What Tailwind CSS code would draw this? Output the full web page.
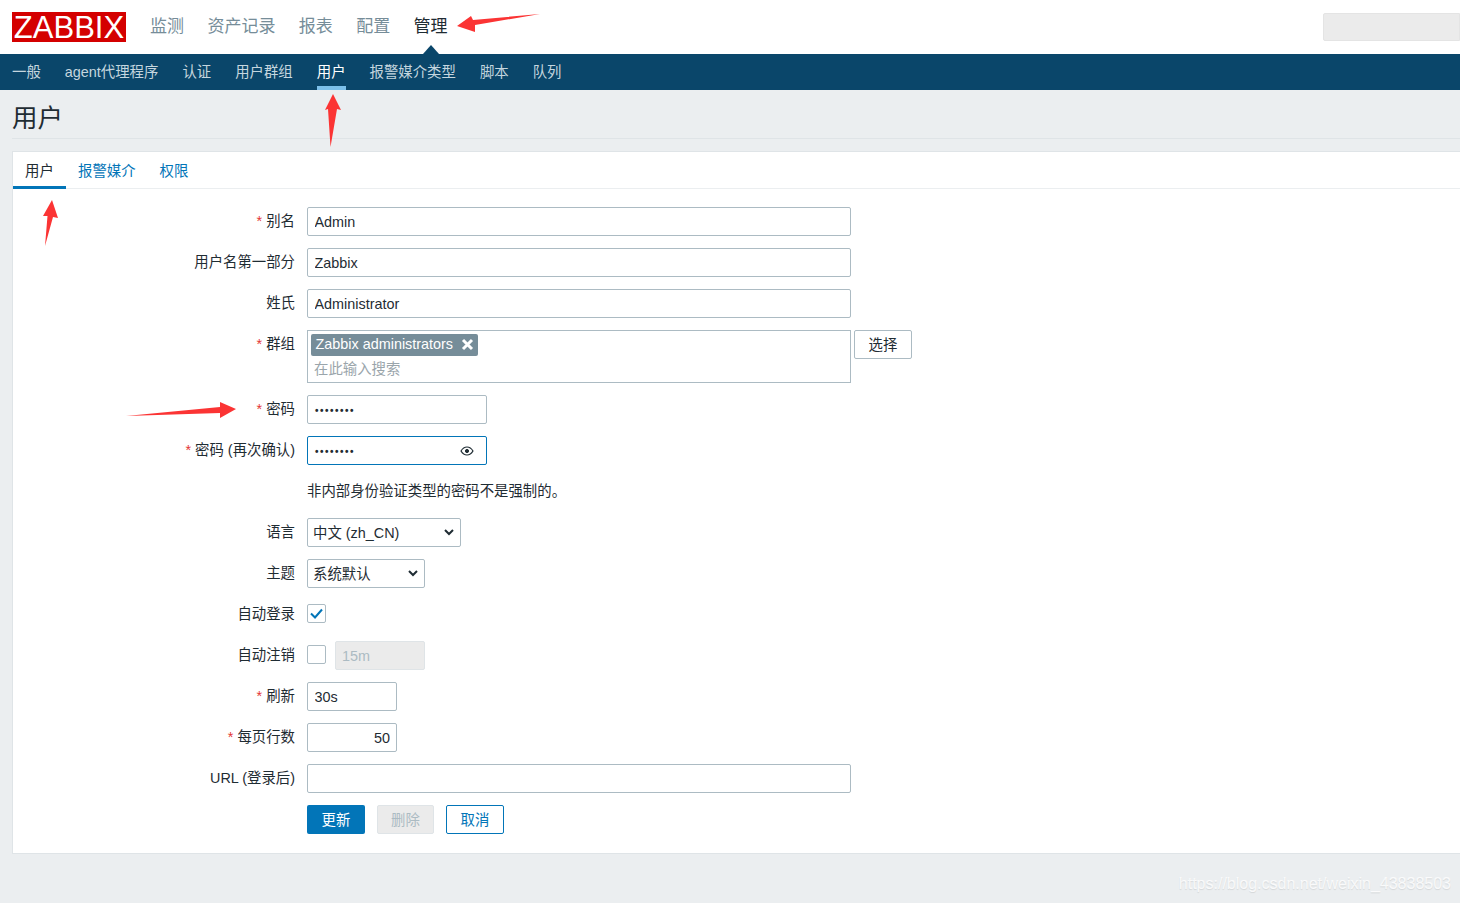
<!DOCTYPE html>
<html lang="zh-CN">
<head>
  <meta charset="UTF-8">
  <title>用户 - Zabbix</title>
  <script src="https://cdn.jsdelivr.net/npm/@tailwindcss/browser@4"></script>
</head>
<body class="relative h-[903px] w-[1460px] overflow-hidden bg-[#ebeef0] font-['Liberation_Sans','Noto_Sans_CJK_SC',sans-serif] text-[14.4px] text-[#1f2c33]">

  <!-- Top menu -->
  <header class="flex h-[54px] items-start bg-white pl-3">
    <div class="mt-3 flex h-[30px] w-[114px] items-center justify-center bg-[#d40000] text-[31px] leading-none text-white">ZABBIX</div>
    <nav class="ml-[24px] mt-[17px] flex gap-[23.4px] text-[17px] leading-5 text-[#768d99]">
      <a>监测</a>
      <a>资产记录</a>
      <a>报表</a>
      <a>配置</a>
      <a class="relative text-[#1f2c33]">管理
        <span class="absolute left-[9px] top-[28px] h-0 w-0 border-x-[8px] border-b-[9px] border-x-transparent border-b-[#0a466a]"></span>
      </a>
    </nav>
    <div class="ml-auto mt-[13px] h-[28px] w-[137px] rounded-l-[2px] border border-[#e4e4e4] bg-[#ebebeb]"></div>
  </header>

  <!-- Sub menu -->
  <nav class="flex h-9 gap-6 bg-[#0a466a] pl-3 leading-9 text-[#c5d6df]">
    <a>一般</a>
    <a>agent代理程序</a>
    <a>认证</a>
    <a>用户群组</a>
    <a class="h-9 border-b-[4px] border-[#7cc0ea] text-white">用户</a>
    <a>报警媒介类型</a>
    <a>脚本</a>
    <a>队列</a>
  </nav>

  <div class="ml-3 flex h-[49px] items-center border-b border-[#dfe4e7] pt-[8px] text-[25.5px]">用户</div>

  <!-- Card -->
  <main class="ml-3 mt-3 h-[703px] border border-r-0 border-[#dfe4e7] bg-white">
    <div class="flex h-[37px] gap-0 border-b border-[#ebeef0] leading-[39px] text-[#0275b8]">
      <a class="h-[37px] w-[53px] border-b-[3px] border-[#0275b8] text-center text-[#1f2c33]">用户</a>
      <a class="ml-3">报警媒介</a>
      <a class="ml-6">权限</a>
    </div>

    <form class="mt-[18px] grid grid-cols-[282px_1fr] gap-x-3 gap-y-3">
      <label class="h-[29px] pt-[3px] text-right leading-[22px]"><span class="text-[#e33734]">*</span> 别名</label>
      <input class="h-[29px] w-[544px] rounded-[2px] border border-[#acbbc3] px-[6.5px] text-[14.4px] outline-none" value="Admin">

      <label class="h-[29px] pt-[3px] text-right leading-[22px]">用户名第一部分</label>
      <input class="h-[29px] w-[544px] rounded-[2px] border border-[#acbbc3] px-[6.5px] text-[14.4px] outline-none" value="Zabbix">

      <label class="h-[29px] pt-[3px] text-right leading-[22px]">姓氏</label>
      <input class="h-[29px] w-[544px] rounded-[2px] border border-[#acbbc3] px-[6.5px] text-[14.4px] outline-none" value="Administrator">

      <label class="pt-[3px] text-right leading-[22px]"><span class="text-[#e33734]">*</span> 群组</label>
      <div class="flex items-start gap-[3px]">
        <div class="h-[53px] w-[544px] border border-[#acbbc3] pl-[3px] pt-[3px]">
          <span class="flex h-[22px] w-[167px] items-center gap-[8px] rounded-[2px] bg-[#768d99] pl-[4.5px] text-white">Zabbix administrators
            <svg class="mb-[1px] h-[13px] w-[13px]" viewBox="0 0 13 13"><path d="M2 2l9 9M11 2l-9 9" stroke="#fff" stroke-width="3"/></svg>
          </span>
          <div class="mt-[2px] pl-[3px] leading-[22px] text-[#9aa5ab]">在此输入搜索</div>
        </div>
        <button type="button" class="h-[29px] w-[58px] rounded-[2px] border border-[#acbbc3] bg-white pt-[2px] text-[#1f2c33]">选择</button>
      </div>

      <label class="h-[29px] pt-[3px] text-right leading-[22px]"><span class="text-[#e33734]">*</span> 密码</label>
      <div class="flex h-[29px] w-[180px] items-center rounded-[2px] border border-[#acbbc3] pl-[7px] pt-[1px] text-[10px] font-bold tracking-[1.500px]">••••••••</div>

      <label class="h-[29px] pt-[3px] text-right leading-[22px]"><span class="text-[#e33734]">*</span> 密码 (再次确认)</label>
      <div class="flex h-[29px] w-[180px] items-center justify-between rounded-[2px] border border-[#0275b8] pl-[7px] pr-[12px] text-[10px] font-bold tracking-[1.500px]">
        <span class="pt-[1px]">••••••••</span>
        <svg class="h-[10px] w-[14px]" viewBox="0 0 14 10" fill="none" stroke="#1f2c33"><path stroke-width="1.2" d="M1 5c1.5-2.5 3.5-4 6-4s4.500 1.500 6 4c-1.500 2.500-3.500 4-6 4s-4.500-1.500-6-4z"/><circle cx="7" cy="5" r="1.600" fill="#1f2c33"/></svg>
      </div>

      <div class="h-[29px]"></div>
      <p class="h-[29px] leading-[29px]">非内部身份验证类型的密码不是强制的。</p>

      <label class="h-[29px] pt-[3px] text-right leading-[22px]">语言</label>
      <div class="flex h-[29px] w-[154px] items-center justify-between rounded-[2px] border border-[#acbbc3] pl-[5px] pr-[6px]">
        <span class="pt-[2px]">中文 (zh_CN)</span>
        <svg class="h-[7px] w-[10px]" viewBox="0 0 10 7" fill="none"><path d="M1 1l4 4 4-4" stroke="#1f2c33" stroke-width="2"/></svg>
      </div>

      <label class="h-[29px] pt-[3px] text-right leading-[22px]">主题</label>
      <div class="flex h-[29px] w-[118px] items-center justify-between rounded-[2px] border border-[#acbbc3] pl-[5px] pr-[6px]">
        <span class="pt-[2px]">系统默认</span>
        <svg class="h-[7px] w-[10px]" viewBox="0 0 10 7" fill="none"><path d="M1 1l4 4 4-4" stroke="#1f2c33" stroke-width="2"/></svg>
      </div>

      <label class="h-[29px] pt-[3px] text-right leading-[22px]">自动登录</label>
      <div class="flex h-[29px] items-center pb-[2px]">
        <span class="flex h-[19px] w-[19px] items-center justify-center rounded-[2px] border border-[#acbbc3]">
          <svg class="h-[11px] w-[13px]" viewBox="0 0 13 11" fill="none"><path d="M1 5.500l4 4 7-8" stroke="#0275b8" stroke-width="2"/></svg>
        </span>
      </div>

      <label class="h-[29px] pt-[3px] text-right leading-[22px]">自动注销</label>
      <div class="flex h-[29px] items-start gap-[9px]">
        <span class="mt-[4px] h-[19px] w-[19px] rounded-[2px] border border-[#acbbc3]"></span>
        <div class="flex h-[29px] w-[90px] items-center rounded-[2px] border border-[#dfe4e7] bg-[#ebebeb] pl-[6px] pt-[2px] text-[#acbbc3]">15m</div>
      </div>

      <label class="h-[29px] pt-[3px] text-right leading-[22px]"><span class="text-[#e33734]">*</span> 刷新</label>
      <input class="h-[29px] w-[90px] rounded-[2px] border border-[#acbbc3] px-[6.5px] text-[14.4px] outline-none" value="30s">

      <label class="h-[29px] pt-[3px] text-right leading-[22px]"><span class="text-[#e33734]">*</span> 每页行数</label>
      <input class="h-[29px] w-[90px] rounded-[2px] border border-[#acbbc3] px-[6px] text-right text-[14.4px] outline-none" value="50">

      <label class="h-[29px] pt-[3px] text-right leading-[22px]">URL (登录后)</label>
      <input class="h-[29px] w-[544px] rounded-[2px] border border-[#acbbc3] px-[6.5px] text-[14.4px] outline-none">

      <div></div>
      <div class="flex gap-3">
        <button type="button" class="h-[29px] w-[58px] rounded-[2px] bg-[#0275b8] pt-[2px] text-white">更新</button>
        <button type="button" class="h-[29px] w-[57px] rounded-[2px] border border-[#dfe4e7] bg-[#ebebeb] pt-[2px] text-[#acbbc3]">删除</button>
        <button type="button" class="h-[29px] w-[58px] rounded-[2px] border border-[#0275b8] bg-white pt-[2px] text-[#0275b8]">取消</button>
      </div>
    </form>
  </main>

  <!-- Red annotation arrows drawn over the screenshot -->
  <svg class="absolute left-0 top-0 h-[903px] w-[1460px]" viewBox="0 0 1460 903" fill="#fb3434">
    <path d="M540 14L473 20 471 16 457 26 475 32 475 25z"/>
    <path d="M330.500 147L328 109 325 110 333 94 341 110 337 109z"/>
    <path d="M45 246L47.500 216 43 216 52 200 58 218 53 217z"/>
    <path d="M126 416L220 407 220 402 236 409 220 418 220 413z"/>
  </svg>

  <div class="absolute right-[9px] top-[874px] text-[16px] leading-5 text-white/80 [text-shadow:0_1px_1px_rgba(0,0,0,0.1)]">https://blog.csdn.net/weixin_43838503</div>
</body>
</html>
